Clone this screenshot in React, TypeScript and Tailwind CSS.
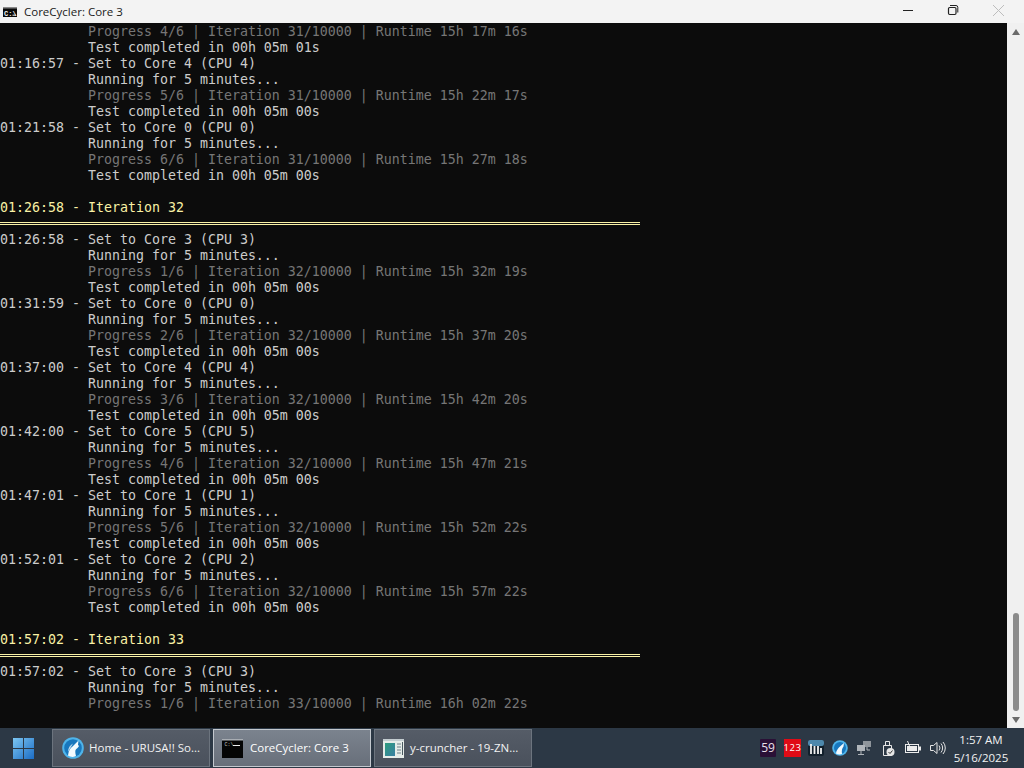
import React from "react";

type L = { t: string; c?: "w" | "g" | "y" | "d" };
const mono = { w: "text-[#cccccc]", g: "text-[#767676]", y: "text-[#f9f1a5]" };

const pad = "           ";
function block(time: string, core: number, prog: string, it: number, run: string, done: string): L[] {
  return [
    { t: `${time} - Set to Core ${core} (CPU ${core})` },
    { t: `${pad}Running for 5 minutes...` },
    { t: `${pad}Progress ${prog} | Iteration ${it}/10000 | Runtime ${run}`, c: "g" },
    { t: `${pad}Test completed in ${done}` },
  ];
}

const lines: L[] = [
  { t: `${pad}Progress 4/6 | Iteration 31/10000 | Runtime 15h 17m 16s`, c: "g" },
  { t: `${pad}Test completed in 00h 05m 01s` },
  ...block("01:16:57", 4, "5/6", 31, "15h 22m 17s", "00h 05m 00s"),
  ...block("01:21:58", 0, "6/6", 31, "15h 27m 18s", "00h 05m 00s"),
  { t: " " },
  { t: "01:26:58 - Iteration 32", c: "y" },
  { t: "", c: "d" },
  ...block("01:26:58", 3, "1/6", 32, "15h 32m 19s", "00h 05m 00s"),
  ...block("01:31:59", 0, "2/6", 32, "15h 37m 20s", "00h 05m 00s"),
  ...block("01:37:00", 4, "3/6", 32, "15h 42m 20s", "00h 05m 00s"),
  ...block("01:42:00", 5, "4/6", 32, "15h 47m 21s", "00h 05m 00s"),
  ...block("01:47:01", 1, "5/6", 32, "15h 52m 22s", "00h 05m 00s"),
  ...block("01:52:01", 2, "6/6", 32, "15h 57m 22s", "00h 05m 00s"),
  { t: " " },
  { t: "01:57:02 - Iteration 33", c: "y" },
  { t: "", c: "d" },
  { t: "01:57:02 - Set to Core 3 (CPU 3)" },
  { t: `${pad}Running for 5 minutes...` },
  { t: `${pad}Progress 1/6 | Iteration 33/10000 | Runtime 16h 02m 22s`, c: "g" },
];

function TitleIcon() {
  return (
    <svg viewBox="0 0 14 10" className="w-[14px] h-[10px] ml-[3px]">
      <rect width="14" height="10" fill="#0a0a0a" />
      <rect width="14" height="1.500" fill="#8a8a8a" />
      <text x="1" y="8.500" fontSize="7" fontWeight="700" fill="#f4f4f4" fontFamily="Liberation Mono, monospace">C:\</text>
      <path d="M9.500 8.200h3.500" stroke="#f4f4f4" strokeWidth="1" />
    </svg>
  );
}

function TaskConsoleIcon() {
  return (
    <svg viewBox="0 0 21 19" className="w-[21px] h-[19px] mr-[7px]">
      <rect width="21" height="19" fill="#050505" />
      <rect width="21" height="1.500" fill="#a8adb3" />
      <text x="2.500" y="6.500" fontSize="5" fill="#c8c8c8" fontFamily="Liberation Mono, monospace">C:\</text>
      <path d="M11 6.500h7" stroke="#eeeeee" strokeWidth="1" />
    </svg>
  );
}

function Wolf() {
  return (
    <svg viewBox="0 0 22 22" className="w-[22px] h-[22px] ml-[1px] mr-[5px]">
      <circle cx="11" cy="11" r="10.800" fill="#4fb4ea" />
      <circle cx="11" cy="11" r="8.800" fill="#1877bd" />
      <path d="M6 18.500 C6.500 14 8 11.500 10.500 9.500 L16.500 3.500 L16 8 L17 9 C16 11 14.500 11.500 13.500 13 C13 15 13.500 17 14 19 C11 20.500 8 20 6 18.500 Z" fill="#f2fafe" />
      <path d="M6 15 C6 11 8 8 11 6.500 L9 10 Z" fill="#f2fafe" opacity="0.75" />
    </svg>
  );
}

function YCruncher() {
  return (
    <svg viewBox="0 0 21 19" className="w-[21px] h-[19px] mr-[6px]">
      <defs>
        <linearGradient id="yc" x1="0" y1="0" x2="1" y2="1">
          <stop offset="0" stopColor="#2d9c7e" />
          <stop offset="1" stopColor="#3b7fa3" />
        </linearGradient>
      </defs>
      <rect width="21" height="19" fill="#e6ece9" />
      <rect x="2" y="4" width="10" height="13" fill="url(#yc)" />
      <rect x="0" y="0" width="21" height="2" fill="#c3ccd0" />
      <path d="M14 5h4M14 8h4M14 11h4M14 14h4" stroke="#6d8088" />
      <path d="M19.500 3v13" stroke="#4b5b62" />
    </svg>
  );
}

function TaskBtn({ active, icon, label }: { active?: boolean; icon: React.ReactNode; label: string }) {
  return (
    <div
      className={`w-[158px] h-[38px] flex items-center pl-[8px] border text-[11.5px] ${
        active
          ? "border-[#c3c8ce] bg-gradient-to-b from-[#7b838e] to-[#686f7a] text-white"
          : "border-[#6c747e] bg-gradient-to-b from-[#555c67] to-[#4a515c] text-[#f2f2f2]"
      }`}
    >
      {icon}
      <span className="whitespace-nowrap">{label}</span>
    </div>
  );
}

export default function App() {
  return (
    <div className="w-[1024px] h-[768px] flex flex-col overflow-hidden bg-[#0c0c0c] font-['Open_Sans','Liberation_Sans',sans-serif]">
      {/* Title bar */}
      <div className="h-[23px] shrink-0 bg-[#f3f3f3] flex items-center">
        <TitleIcon />
        <span className="ml-[7px] text-[11.5px] text-[#1a1a1a]">CoreCycler: Core 3</span>
        <div className="ml-auto mr-[4px] flex items-center">
          <svg viewBox="0 0 46 23" className="w-[46px] h-[23px]">
            <path d="M21 10.500h10" stroke="#222" strokeWidth="1" />
          </svg>
          <svg viewBox="0 0 46 23" className="w-[46px] h-[23px]">
            <rect x="20.500" y="7.500" width="7.500" height="7" rx="1.200" fill="none" stroke="#222" strokeWidth="1.200" />
            <path d="M22 5.500h6a1.800 1.800 0 0 1 1.800 1.800v5.200" fill="none" stroke="#222" strokeWidth="1" />
          </svg>
          <svg viewBox="0 0 46 23" className="w-[46px] h-[23px]">
            <path d="M19 5 L30 16 M30 5 L19 16" stroke="#bdbdbd" strokeWidth="1" />
          </svg>
        </div>
      </div>

      {/* Console */}
      <div className="flex-1 flex min-h-0">
        <div className="flex-1 min-w-0 pt-[1px] bg-[#0c0c0c] font-['DejaVu_Sans_Mono','Liberation_Mono',monospace] text-[13.29px] leading-[16px]">
          {lines.map((l, i) =>
            l.c === "d" ? (
              <div key={i} className="h-[16px] flex items-center">
                <div className="w-[640px] h-[3px] mt-[-1px] border-y border-[#f9f1a5]" />
              </div>
            ) : (
              <div key={i} className={`h-[16px] whitespace-pre ${mono[l.c ?? "w"]}`}>
                {l.t}
              </div>
            )
          )}
        </div>
        <div className="w-[17px] shrink-0 bg-[#f0f0f0] flex flex-col items-center pt-[6px] pb-[5px]">
          <div className="w-0 h-0 border-x-[4px] border-x-transparent border-b-[6px] border-b-[#6a6a6a]" />
          <div className="flex-1" />
          <div className="w-[6px] h-[98px] bg-[#8b8b8b] rounded-full mb-[6px]" />
          <div className="w-0 h-0 border-x-[4px] border-x-transparent border-t-[6px] border-t-[#6a6a6a]" />
        </div>
      </div>

      {/* Taskbar */}
      <div className="h-[40px] shrink-0 bg-[#2c3845] flex items-center">
        <div className="w-[52px] flex pl-[13px]">
          <svg viewBox="0 0 21 21" className="w-[21px] h-[21px]">
            <defs>
              <linearGradient id="st" x1="0" y1="0" x2="1" y2="1">
                <stop offset="0" stopColor="#7cc6f2" />
                <stop offset="1" stopColor="#1b6cc4" />
              </linearGradient>
            </defs>
            <path d="M0 0h10v10H0zM11 0h10v10H11zM0 11h10v10H0zM11 11h10v10H11z" fill="url(#st)" />
          </svg>
        </div>
        <div className="flex items-center gap-[3px]">
          <TaskBtn icon={<Wolf />} label="Home - URUSA!! So..." />
          <TaskBtn active icon={<TaskConsoleIcon />} label="CoreCycler: Core 3" />
          <TaskBtn icon={<YCruncher />} label="y-cruncher - 19-ZN..." />
        </div>
        <div className="ml-auto flex items-center gap-[8px]">
          <div className="w-[16px] h-[18px] rounded-[1px] bg-[#2a1036] text-[#e8e0ea] text-[12px] flex items-center justify-center">59</div>
          <div className="w-[17px] mr-[-1px] h-[18px] bg-[#e00b16] text-white text-[9.5px] tracking-[0.5px] flex items-center justify-center">123</div>
          <svg viewBox="0 0 16 16" className="w-[16px] h-[16px]">
            <rect width="16" height="16" rx="2" fill="#12202c" />
            <rect width="16" height="6" rx="2" fill="#4d88ac" />
            <path d="M3 4v10M6.500 6v8M10 6v8M13 8v6" stroke="#f0f0f0" strokeWidth="1.800" />
          </svg>
          <svg viewBox="0 0 16 16" className="w-[16px] h-[16px]">
            <circle cx="8" cy="8" r="7.800" fill="#4fb4ea" />
            <circle cx="8" cy="8" r="6" fill="#1877bd" />
            <path d="M4 13.500 C4.500 10 6 8 12 3 L11.500 6.500 C10 8.500 9.500 10 10 14 C8 14.800 5.500 14.500 4 13.500 Z" fill="#f2fafe" />
          </svg>
          <svg viewBox="0 0 16 16" className="w-[16px] h-[16px]">
            <rect x="7" y="1" width="8" height="6" fill="#8f959b" />
            <rect x="1" y="5" width="8" height="6" fill="#b0b5ba" />
            <path d="M5 11v3M2 14.500h6M11 7v3h3" stroke="#b0b5ba" fill="none" />
          </svg>
          <svg viewBox="0 0 16 18" className="w-[16px] h-[18px]">
            <path d="M3.500 6.500h8v10h-8zM5.500 6.500v-4h4v4" fill="none" stroke="#e6e6e6" />
            <circle cx="10.500" cy="13" r="4" fill="#e6e6e6" />
            <path d="M8.500 13l1.500 1.500 2.500-3" stroke="#333" fill="none" />
          </svg>
          <svg viewBox="0 0 17 14" className="w-[17px] h-[14px]">
            <rect x="1.500" y="3.500" width="13" height="8" fill="none" stroke="#ececec" />
            <rect x="3" y="5" width="10" height="5" fill="#ececec" />
            <rect x="15" y="5.500" width="2" height="4" fill="#ececec" />
            <path d="M3.500 0l2 5" stroke="#ececec" strokeWidth="1" />
          </svg>
          <svg viewBox="0 0 17 16" className="w-[17px] h-[16px]">
            <path d="M1.500 5.500h3l3.500-3v11l-3.500-3h-3z" fill="none" stroke="#e6e6e6" />
            <path d="M10 5.500a4 4 0 0 1 0 5M12 3.500a7 7 0 0 1 0 9M14 2a9 9 0 0 1 0 12" fill="none" stroke="#e6e6e6" />
          </svg>
          <div className="w-[62px] ml-[-4px] mr-[12px] mt-[2px] text-center text-[11.5px] leading-[18px] text-[#f2f2f2]">
            <div>1:57 AM</div>
            <div>5/16/2025</div>
          </div>
        </div>
      </div>
    </div>
  );
}
